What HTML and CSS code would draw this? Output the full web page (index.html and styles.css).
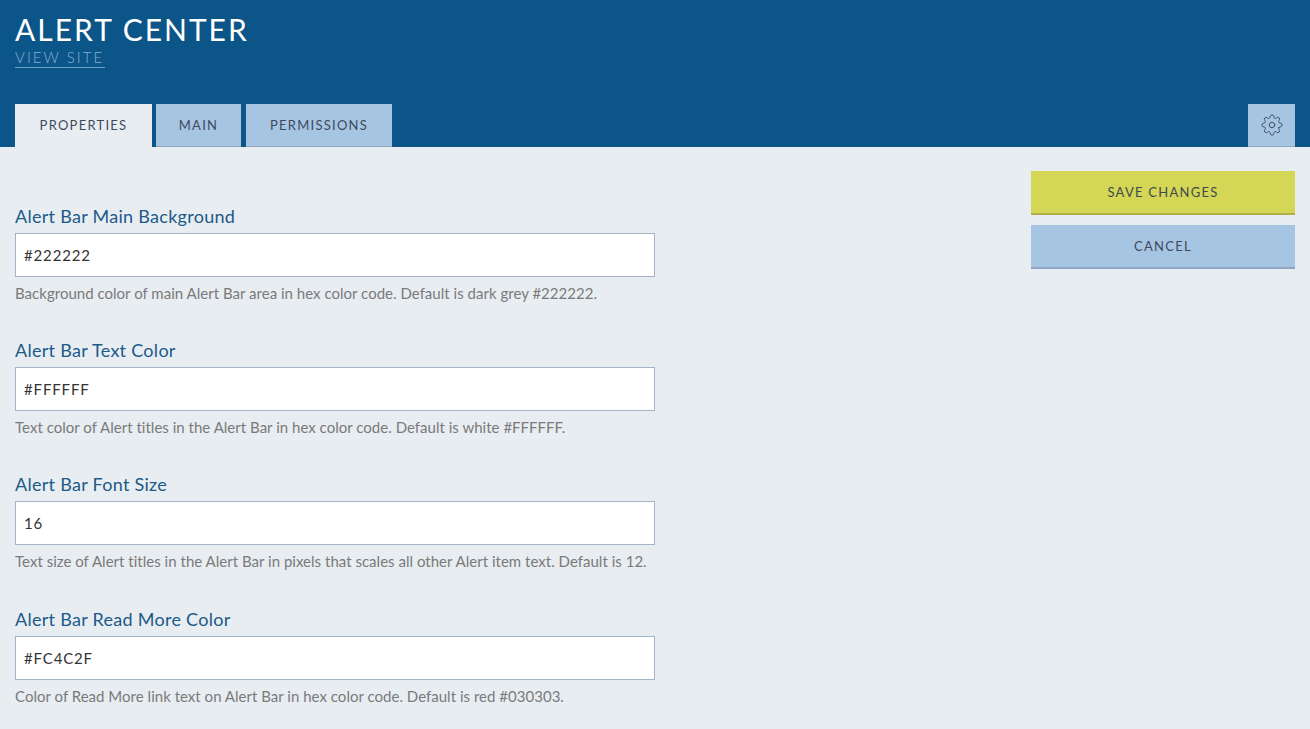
FILE: index.html
```html
<!DOCTYPE html>
<html lang="en">
<head>
<meta charset="utf-8">
<title>Alert Center</title>
<link rel="stylesheet" href="styles.css">
</head>
<body>
<header class="header">
  <div class="title-block">
    <h1 class="title">ALERT CENTER</h1>
    <a class="view-site" href="#">VIEW SITE</a>
  </div>
  <nav class="tabs">
    <a class="tab tab-active" href="#">PROPERTIES</a>
    <a class="tab tab-main" href="#">MAIN</a>
    <a class="tab tab-perm" href="#">PERMISSIONS</a>
    <a class="tab tab-gear" href="#" aria-label="Settings">
      <svg class="gear" viewBox="0 0 24 24" width="22" height="22" fill="none" stroke="#3f4f5f" stroke-width="1.05" stroke-linecap="round" stroke-linejoin="round">
        <circle cx="12" cy="12" r="3"/>
        <path d="M19.4 15a1.65 1.65 0 0 0 .33 1.82l.06.06a2 2 0 0 1 0 2.83 2 2 0 0 1-2.83 0l-.06-.06a1.65 1.65 0 0 0-1.82-.33 1.65 1.65 0 0 0-1 1.51V21a2 2 0 0 1-2 2 2 2 0 0 1-2-2v-.09A1.65 1.65 0 0 0 9 19.4a1.65 1.65 0 0 0-1.82.33l-.06.06a2 2 0 0 1-2.83 0 2 2 0 0 1 0-2.83l.06-.06a1.65 1.65 0 0 0 .33-1.82 1.65 1.65 0 0 0-1.51-1H3a2 2 0 0 1-2-2 2 2 0 0 1 2-2h.09A1.65 1.65 0 0 0 4.6 9a1.65 1.65 0 0 0-.33-1.82l-.06-.06a2 2 0 0 1 0-2.83 2 2 0 0 1 2.83 0l.06.06a1.65 1.65 0 0 0 1.82.33H9a1.65 1.65 0 0 0 1-1.51V3a2 2 0 0 1 2-2 2 2 0 0 1 2 2v.09a1.65 1.65 0 0 0 1 1.51 1.65 1.65 0 0 0 1.82-.33l.06-.06a2 2 0 0 1 2.83 0 2 2 0 0 1 0 2.83l-.06.06a1.65 1.65 0 0 0-.33 1.82V9a1.65 1.65 0 0 0 1.51 1H21a2 2 0 0 1 2 2 2 2 0 0 1-2 2h-.09a1.65 1.65 0 0 0-1.51 1z"/>
      </svg>
    </a>
  </nav>
</header>
<main class="content">
  <form class="form">
    <div class="field">
      <label class="label">Alert Bar Main Background</label>
      <input class="input" type="text" value="#222222">
      <p class="hint">Background color of main Alert Bar area in hex color code. Default is dark grey #222222.</p>
    </div>
    <div class="field">
      <label class="label">Alert Bar Text Color</label>
      <input class="input" type="text" value="#FFFFFF">
      <p class="hint">Text color of Alert titles in the Alert Bar in hex color code. Default is white #FFFFFF.</p>
    </div>
    <div class="field field-third">
      <label class="label">Alert Bar Font Size</label>
      <input class="input" type="text" value="16">
      <p class="hint">Text size of Alert titles in the Alert Bar in pixels that scales all other Alert item text. Default is 12.</p>
    </div>
    <div class="field field-last">
      <label class="label">Alert Bar Read More Color</label>
      <input class="input" type="text" value="#FC4C2F">
      <p class="hint">Color of Read More link text on Alert Bar in hex color code. Default is red #030303.</p>
    </div>
  </form>
  <aside class="actions">
    <button class="btn btn-save" type="button">SAVE CHANGES</button>
    <button class="btn btn-cancel" type="button">CANCEL</button>
  </aside>
</main>
</body>
</html>
```
FILE: styles.css
```css
* { box-sizing: border-box; }
html, body { height: 100%; }
body {
  margin: 0;
  background: #e8edf2;
  font-family: "Lato", "Noto Sans", sans-serif;
  overflow: hidden;
}
.header {
  height: 147px;
  background: #0b5588;
  padding: 0 15px;
  display: flex;
  flex-direction: column;
}
.title-block { height: 104px; padding-top: 11px; }
.title {
  margin: 0;
  font-size: 30px;
  line-height: 36px;
  font-weight: 400;
  color: #fff;
  letter-spacing: 2px;
}
.view-site {
  display: block;
  width: 90px;
  height: 18px;
  margin-top: 3px;
  font-size: 15px;
  font-weight: 300;
  line-height: 14px;
  letter-spacing: 2.05px;
  color: #86afd2;
  text-decoration: none;
  white-space: nowrap;
  border-bottom: 1px solid #6b9cc4;
}
.tabs { display: flex; height: 43px; }
.tab {
  height: 43px;
  line-height: 42px;
  font-size: 13px;
  letter-spacing: 1.25px;
  color: #3e4a5c;
  text-decoration: none;
  text-align: center;
  background: #a6c5e3;
  border-bottom: 1px solid #8ea6c2;
}
.tab-active { width: 137px; background: #e8edf2; border-bottom: 0; }
.tab-main { width: 85px; margin-left: 4px; }
.tab-perm { width: 146px; margin-left: 5px; }
.tab-gear {
  width: 47px;
  margin-left: auto;
  display: flex;
  align-items: center;
  justify-content: center;
}
.content {
  display: flex;
  justify-content: space-between;
  padding: 24px 15px 0;
}
.form { width: 640px; padding-top: 35px; }
.field { margin-bottom: 37px; }
.field-third { margin-bottom: 38px; }
.field-last { margin-bottom: 0; }
.label {
  display: block;
  height: 27px;
  font-size: 18px;
  line-height: 20px;
  color: #1c5a88;
  letter-spacing: 0.28px;
}
.input {
  display: block;
  width: 640px;
  height: 44px;
  padding: 0 8px;
  background: #fff;
  border: 1px solid #a3b2c4;
  border-radius: 0;
  font-family: inherit;
  font-size: 15px;
  letter-spacing: 0.85px;
  color: #333;
  outline: none;
}
.hint {
  margin: 8px 0 0;
  height: 18px;
  font-size: 15px;
  line-height: 16px;
  color: #7a7a7a;
  letter-spacing: 0.02px;
  white-space: nowrap;
}
.actions { width: 264px; display: flex; flex-direction: column; gap: 10px; }
.btn {
  height: 44px;
  padding: 0;
  border: 0;
  font-family: inherit;
  font-size: 13px;
  letter-spacing: 1.25px;
  color: #3e4a4c;
  cursor: pointer;
}
.btn-save { background: #d4d655; border-bottom: 2px solid #b0b248; }
.btn-cancel { background: #a6c5e3; border-bottom: 2px solid #8ea6c2; color: #3e4a5c; }
```
